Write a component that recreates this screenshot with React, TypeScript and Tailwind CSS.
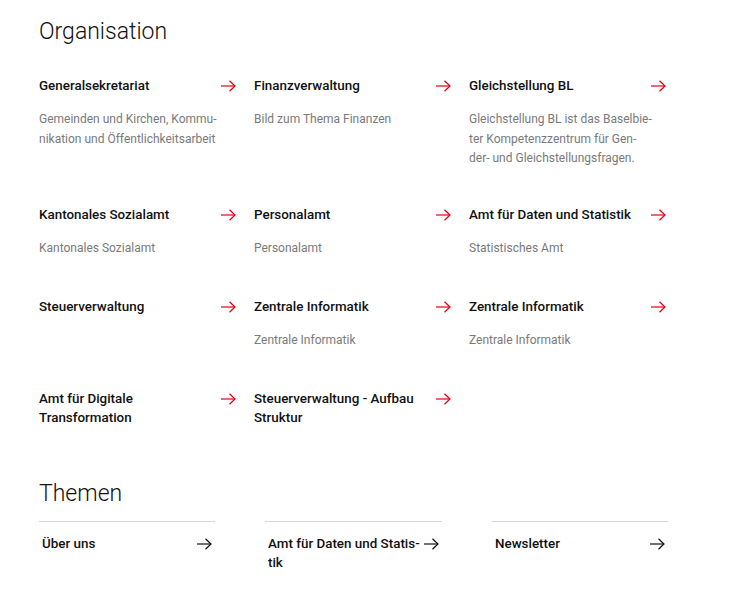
const orgItems = [
  {
    title: "Generalsekretariat",
    text: "Gemeinden und Kirchen, Kommu­nikation und Öffentlichkeitsarbeit",
  },
  { title: "Finanzverwaltung", text: "Bild zum Thema Finanzen" },
  {
    title: "Gleichstellung BL",
    text: "Gleichstellung BL ist das Baselbie­ter Kompetenzzentrum für Gen­der- und Gleichstellungsfragen.",
  },
  { title: "Kantonales Sozialamt", text: "Kantonales Sozialamt" },
  { title: "Personalamt", text: "Personalamt" },
  { title: "Amt für Daten und Statistik", text: "Statistisches Amt" },
  { title: "Steuerverwaltung", text: "" },
  { title: "Zentrale Informatik", text: "Zentrale Informatik" },
  { title: "Zentrale Informatik", text: "Zentrale Informatik" },
  { title: "Amt für Digitale Transformation", text: "" },
  { title: "Steuerverwaltung - Aufbau Struktur", text: "" },
];

const themen = ["Über uns", "Amt für Daten und Statis­tik", "Newsletter"];

const Arrow = ({ className }: { className: string }) => {
  return (
    <svg
      width="15"
      height="12"
      viewBox="0 0 15 12"
      fill="none"
      stroke="currentColor"
      strokeWidth="1.2"
      className={className}
    >
      <path d="M0 6 H14" />
      <path d="M8.5 0.8 L14 6 L8.5 11.2" />
    </svg>
  );
};

const App = () => {
  return (
    <div
      className="bg-white min-h-[596px] text-[#111]"
      style={{ fontFamily: "Roboto, 'Liberation Sans', sans-serif" }}
    >
      <div className="pl-[39px] pt-[18px] w-[668px]">
        <h2 className="text-[23px] leading-[27px] font-light text-[#111]">
          Organisation
        </h2>
        <div className="grid grid-cols-[197px_197px_197px] gap-x-[18px] gap-y-[36px] mt-[31px]">
          {orgItems.map((item, index) => {
            return (
              <div key={index} className="flex flex-col min-h-[56px]">
                <div className="flex flex-row justify-between items-start">
                  <span className="text-[13.4px] leading-[19px] font-medium w-[170px]">
                    {item.title}
                  </span>
                  <Arrow className="text-[#e3000f] mt-[4px] shrink-0" />
                </div>
                {item.text ? (
                  <p className="text-[12px] leading-[19.5px] text-[#7a7a7a] mt-[15px] w-[183px] hyphens-manual">
                    {item.text}
                  </p>
                ) : null}
              </div>
            );
          })}
        </div>
        <h2 className="text-[23px] leading-[27px] font-light text-[#111] mt-[35px]">
          Themen
        </h2>
        <div className="grid grid-cols-[176px_177px_176px] gap-x-[50px] mt-[14px]">
          {themen.map((t, index) => {
            return (
              <div
                key={index}
                className="border-t border-[#d6d6d6] pt-[12px] pl-[3px] pr-[3px] flex flex-row justify-between items-start"
              >
                <span className="text-[13.4px] leading-[19px] font-medium w-[155px]">
                  {t}
                </span>
                <Arrow className="text-[#111] mt-[4px] shrink-0" />
              </div>
            );
          })}
        </div>
      </div>
    </div>
  );
};
export default App;
